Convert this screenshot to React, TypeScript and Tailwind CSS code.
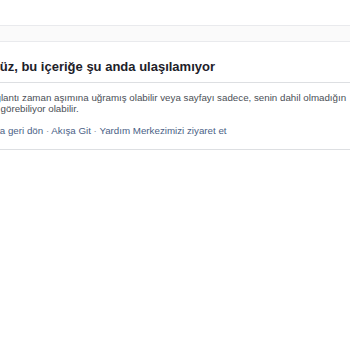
export default function App() {
  return (
    <main className="h-[350px] w-[350px] overflow-hidden bg-white font-['Liberation_Sans',Arial,sans-serif]">
      <div className="h-[25px]" />
      <div className="h-[17px] border-y border-[#e9eaed] bg-[#fafafa]" />
      {/* content column starts left of the viewport, as in the cropped page */}
      <section className="ml-[-30px] w-[400px] pt-[17px]">
        <h2 className="border-b border-[#dddfe2] pb-[7px] text-[13px] font-bold leading-[16px] whitespace-nowrap text-[#1d2129]">
          <span className="-ml-[10px] inline-block">Üzgünüz, bu içeriğe şu anda ulaşılamıyor</span>
        </h2>
        <p className="pt-[9px] text-[9.75px] leading-[11px] whitespace-nowrap text-[#4b4f56]">
          Bu bağlantı zaman aşımına uğramış olabilir veya sayfayı sadece, senin dahil olmadığın
          <br />
          <span className="-ml-[3px]">bir kitle görebiliyor olabilir.</span>
        </p>
        <div className="border-b border-[#dddfe2] pt-[11px] pb-[13px] text-[9.75px] leading-[11px] whitespace-nowrap text-[#8d949e]">
          <a className="text-[#4b5f86]">Sayfaya geri dön</a> · <a className="text-[#4b5f86]">Akışa Git</a> ·{" "}
          <a className="text-[#4b5f86]">Yardım Merkezimizi ziyaret et</a>
        </div>
      </section>
    </main>
  );
}
